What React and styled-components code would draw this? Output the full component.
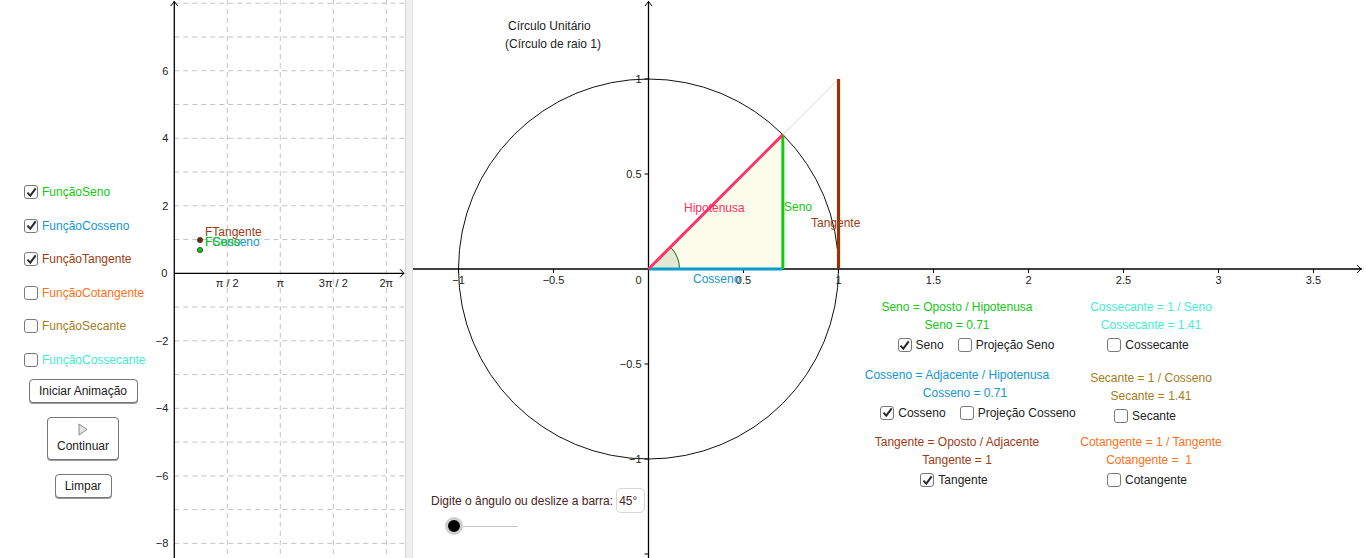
import React from "react";
import styled, { createGlobalStyle } from "styled-components";

const FONT = `"Liberation Sans", Arial, sans-serif`;

const C = {
  seno: "#14c814",
  cosseno: "#1596d0",
  tangente: "#9c3c14",
  cotangente: "#ff7020",
  secante: "#a67c1c",
  cossecante: "#44eed0",
  hipotenusa: "#ff3060",
  label: "#222",
  axis: "#000",
  grid: "#c4c4c4",
  prompt: "#4a2323",
};

const GlobalStyle = createGlobalStyle`
  html, body {
    margin: 0;
    padding: 0;
    background: #fff;
  }
  body {
    font-family: ${FONT};
    overflow: hidden;
  }
`;

const Applet = styled.div`
  display: flex;
  width: 1366px;
  height: 558px;
  overflow: hidden;
  background: #fff;
`;

const GraphicsView = styled.div`
  position: relative;
  flex: ${(p) => (p.$width ? `0 0 ${p.$width}px` : "1 1 auto")};
  height: 100%;
  overflow: hidden;
  background: #fff;
`;

const Splitter = styled.div`
  flex: 0 0 8px;
  box-sizing: border-box;
  background: #efefef;
  border-left: 1px solid #d6d6d6;
  border-right: 1px solid #e0e0e0;
`;

const Drawing = styled.svg`
  position: absolute;
  inset: 0;
  width: 100%;
  height: 100%;
  font-family: ${FONT};
`;

/* free text objects of the canvas */
const CanvasText = styled.span`
  position: absolute;
  left: ${(p) => p.$x}px;
  top: ${(p) => p.$y - 7}px;
  font-size: 12px;
  line-height: 14px;
  color: ${(p) => p.$color || C.label};
  white-space: pre;
`;

const Line = styled.span`
  font-size: 12px;
  line-height: 14px;
  color: ${(p) => p.$color || C.label};
  white-space: pre;
`;

/* check boxes */
const CheckItem = styled.label`
  display: flex;
  align-items: center;
  gap: 4px;
  font-size: 12px;
  line-height: 14px;
  color: ${(p) => p.$color || C.label};
  white-space: nowrap;
`;

const Box = styled.span`
  flex: 0 0 14px;
  height: 14px;
  box-sizing: border-box;
  border: 1.6px solid #7a7a7a;
  border-radius: 3px;
  background: #fff;
  display: flex;
  align-items: center;
  justify-content: center;
`;

function Check({ checked, color, children }) {
  return (
    <CheckItem $color={color}>
      <Box>
        {checked && (
          <svg width="11" height="11" viewBox="0 0 11 11">
            <path d="M1.4 5.6 L4.3 8.7 L9.7 1.4" fill="none" stroke="#2a2a2a" strokeWidth="2" />
          </svg>
        )}
      </Box>
      <span>{children}</span>
    </CheckItem>
  );
}

/* left control column */
const Controls = styled.div`
  position: absolute;
  left: 24px;
  top: 185px;
  width: 118px;
  display: flex;
  flex-direction: column;
`;

const CheckList = styled.div`
  display: flex;
  flex-direction: column;
  gap: 19.6px;
`;

const ButtonStack = styled.div`
  margin-top: 12px;
  display: flex;
  flex-direction: column;
  align-items: center;
  gap: 14px;
`;

const GgbButton = styled.button`
  width: ${(p) => p.$w}px;
  height: ${(p) => p.$h}px;
  padding: 0;
  display: flex;
  flex-direction: column;
  align-items: center;
  justify-content: center;
  gap: 3px;
  font: 12px ${FONT};
  color: #222;
  background: #fff;
  border: 1.5px solid #777;
  border-radius: 4px;
  box-shadow: 0 1px 0 #999;
`;

/* right formula panel */
const FormulaGrid = styled.div`
  position: absolute;
  left: 447px;
  top: 300px;
  display: grid;
  grid-template-columns: 194px 194px;
  row-gap: 15.5px;
`;

const Block = styled.div`
  display: flex;
  flex-direction: column;
  align-items: center;
  transform: translateY(${(p) => p.$dy || 0}px);
`;

const Value = styled(Line)`
  margin-top: 4px;
  transform: translateX(${(p) => p.$shift || 0}px);
`;

const CheckRow = styled.div`
  margin-top: 6px;
  display: flex;
  gap: 14px;
  transform: translateX(${(p) => p.$shift || 0}px);
`;

/* angle input */
const AngleInput = styled.div`
  position: absolute;
  left: 18px;
  top: 488px;
  display: flex;
  align-items: center;
  gap: 3px;
`;

const InputBox = styled.div`
  width: 29px;
  height: 25px;
  box-sizing: border-box;
  border: 1px solid #d6d6d6;
  border-radius: 5px;
  padding-left: 2px;
  display: flex;
  align-items: center;
  font-size: 12px;
  color: ${C.prompt};
`;

const Slider = styled.div`
  position: absolute;
  left: 32px;
  top: 517px;
  width: 73px;
  height: 18px;
  display: flex;
  align-items: center;
`;

const Knob = styled.span`
  flex: 0 0 18px;
  height: 18px;
  box-sizing: border-box;
  border-radius: 50%;
  background: #000;
  border: 3.5px solid #cdcdcd;
`;

const Track = styled.span`
  flex: 1;
  height: 1px;
  background: #c8c8c8;
`;

/* ---------- left view: graphs of the functions ---------- */

const LW = 405;
const L = { ox: 174.3, oy: 273.3, uy: 33.76, ux: 53 };

function LeftAxes() {
  const hLines = [];
  for (let k = -8; k <= 8; k++) {
    const y = L.oy - k * L.uy;
    if (k !== 0 && y > 0 && y < 558) hLines.push(y);
  }
  const vLines = [1, 2, 3, 4].map((j) => L.ox + j * L.ux);
  const yLabels = [6, 4, 2, -2, -4, -6, -8];
  const xLabels = ["π / 2", "π", "3π / 2", "2π"];
  return (
    <Drawing>
      <g stroke={C.grid} strokeWidth="1" strokeDasharray="5 4">
        {hLines.map((y) => (
          <line key={y} x1={L.ox} y1={y} x2={LW} y2={y} />
        ))}
        {vLines.map((x) => (
          <line key={x} x1={x} y1={0} x2={x} y2={558} />
        ))}
      </g>
      <g stroke={C.axis} strokeWidth="1.3" fill="none">
        <line x1={L.ox} y1={1} x2={L.ox} y2={558} />
        <line x1={L.ox} y1={L.oy} x2={LW - 1} y2={L.oy} />
        <path d={`M${L.ox - 3.5} 6 L${L.ox} 1.5 L${L.ox + 3.5} 6`} strokeWidth="1" />
        <path d={`M${LW - 5} ${L.oy - 4} L${LW - 1} ${L.oy} L${LW - 5} ${L.oy + 4}`} strokeWidth="1" />
      </g>
      <g fontSize="11" fill={C.label}>
        {yLabels.map((v) => (
          <text key={v} x={L.ox - 6} y={L.oy - v * L.uy + 4} textAnchor="end">
            {v < 0 ? `−${-v}` : v}
          </text>
        ))}
        <text x={L.ox - 7} y={L.oy + 4} textAnchor="end">0</text>
        {xLabels.map((t, i) => (
          <text key={t} x={L.ox + (i + 1) * L.ux} y={L.oy + 14} textAnchor="middle">
            {t}
          </text>
        ))}
      </g>
      <circle cx="200" cy="240" r="2.6" fill="#7a2a0a" stroke="#333" strokeWidth="0.8" />
      <circle cx="200" cy="250" r="2.6" fill={C.seno} stroke="#333" strokeWidth="0.8" />
    </Drawing>
  );
}

/* ---------- right view: unit circle ---------- */

const R = { ox: 235.5, oy: 269, u: 190, w: 953 };

function UnitCircle() {
  const { ox, oy, u, w } = R;
  const a = Math.PI / 4;
  const px = ox + u * Math.cos(a);
  const py = oy - u * Math.sin(a);
  const ar = 31;
  const xt = [-1, -0.5, 0.5, 1, 1.5, 2, 2.5, 3, 3.5];
  const yt = [1, 0.5, -0.5, -1, -1.5];
  const fmt = (v) => (v < 0 ? `−${-v}` : `${v}`);
  return (
    <Drawing>
      <polygon points={`${ox},${oy} ${px},${oy} ${px},${py}`} fill="#fdfdeb" />
      <path
        d={`M${ox} ${oy} L${ox + ar} ${oy} A${ar} ${ar} 0 0 0 ${ox + ar * Math.cos(a)} ${oy - ar * Math.sin(a)} Z`}
        fill="#e2ead6"
      />
      <path
        d={`M${ox + ar} ${oy} A${ar} ${ar} 0 0 0 ${ox + ar * Math.cos(a)} ${oy - ar * Math.sin(a)}`}
        fill="none"
        stroke="#1f6a1f"
        strokeWidth="1"
      />
      <circle cx={ox} cy={oy} r={u} fill="none" stroke="#111" strokeWidth="1" />
      <g stroke={C.axis} strokeWidth="1.3" fill="none">
        <line x1={0} y1={oy} x2={w - 4} y2={oy} />
        <line x1={ox} y1={1} x2={ox} y2={558} />
        <path d={`M${ox - 3.5} 6 L${ox} 1.5 L${ox + 3.5} 6`} strokeWidth="1" />
        <path d={`M${w - 9} ${oy - 4} L${w - 5} ${oy} L${w - 9} ${oy + 4}`} strokeWidth="1" />
        {xt.map((v) => (
          <line key={v} x1={ox + v * u} y1={oy} x2={ox + v * u} y2={oy + 4} strokeWidth="1" />
        ))}
        {yt.map((v) => (
          <line key={v} x1={ox - 4} y1={oy - v * u} x2={ox} y2={oy - v * u} strokeWidth="1" />
        ))}
      </g>
      <g fontSize="11" fill={C.label}>
        {xt.map((v) => (
          <text key={v} x={ox + v * u} y={oy + 15} textAnchor="middle">
            {fmt(v)}
          </text>
        ))}
        <text x={ox - 7} y={oy + 15} textAnchor="end">0</text>
        {yt.slice(0, 4).map((v) => (
          <text key={v} x={ox - 7} y={oy - v * u + 4} textAnchor="end">
            {fmt(v)}
          </text>
        ))}
      </g>
      <line x1={px} y1={py} x2={ox + u} y2={oy - u} stroke="#d4d4d4" strokeWidth="1" />
      <line x1={ox + u} y1={oy - u} x2={ox + u} y2={oy} stroke="#993300" strokeWidth="3.2" />
      <line x1={ox} y1={oy} x2={px} y2={oy} stroke="#0a9bd0" strokeWidth="3" />
      <line x1={px} y1={py} x2={px} y2={oy} stroke="#11cc11" strokeWidth="3" />
      <line x1={ox} y1={oy} x2={px} y2={py} stroke="#ff3366" strokeWidth="3" />
    </Drawing>
  );
}

const formulas = [
  { color: C.seno, rule: "Seno = Oposto / Hipotenusa", value: "Seno = 0.71", shift: 19,
    checks: [["Seno", true], ["Projeção Seno", false]] },
  { color: C.cossecante, rule: "Cossecante = 1 / Seno", value: "Cossecante = 1.41", shift: -3,
    checks: [["Cossecante", false]] },
  { color: C.cosseno, rule: "Cosseno = Adjacente / Hipotenusa", value: "Cosseno = 0.71", shift: 21, vshift: 8,
    checks: [["Cosseno", true], ["Projeção Cosseno", false]] },
  { color: C.secante, rule: "Secante = 1 / Cosseno", value: "Secante = 1.41", shift: -6, dy: 3,
    checks: [["Secante", false]] },
  { color: C.tangente, rule: "Tangente = Oposto / Adjacente", value: "Tangente = 1", shift: -3,
    checks: [["Tangente", true]] },
  { color: C.cotangente, rule: "Cotangente = 1 / Tangente", value: "Cotangente =  1", shift: -4, vshift: -2,
    checks: [["Cotangente", false]] },
];

const functionToggles = [
  ["FunçãoSeno", C.seno, true],
  ["FunçãoCosseno", C.cosseno, true],
  ["FunçãoTangente", C.tangente, true],
  ["FunçãoCotangente", C.cotangente, false],
  ["FunçãoSecante", C.secante, false],
  ["FunçãoCossecante", C.cossecante, false],
];

export default function App() {
  return (
    <>
      <GlobalStyle />
      <Applet>
        <GraphicsView $width={LW}>
          <LeftAxes />
          <CanvasText $x={205} $y={232} $color={C.tangente}>FTangente</CanvasText>
          <CanvasText $x={205} $y={242} $color={C.cosseno}>FCosseno</CanvasText>
          <CanvasText $x={205} $y={242} $color={C.seno}>FSeno</CanvasText>

          <Controls>
            <CheckList>
              {functionToggles.map(([name, color, on]) => (
                <Check key={name} color={color} checked={on}>
                  {name}
                </Check>
              ))}
            </CheckList>
            <ButtonStack>
              <GgbButton $w={109} $h={24}>Iniciar Animação</GgbButton>
              <GgbButton $w={72} $h={43}>
                <svg width="10" height="13" viewBox="0 0 10 13">
                  <path d="M1 1 L9 6.5 L1 12 Z" fill="#e4e4e4" stroke="#8a8a8a" strokeWidth="1" />
                </svg>
                <span>Continuar</span>
              </GgbButton>
              <GgbButton $w={57} $h={24}>Limpar</GgbButton>
            </ButtonStack>
          </Controls>
        </GraphicsView>

        <Splitter />

        <GraphicsView>
          <UnitCircle />
          <CanvasText $x={95} $y={26}>Círculo Unitário</CanvasText>
          <CanvasText $x={92} $y={44}>(Círculo de raio 1)</CanvasText>
          <CanvasText $x={271} $y={208} $color={C.hipotenusa}>Hipotenusa</CanvasText>
          <CanvasText $x={371} $y={207} $color={C.seno}>Seno</CanvasText>
          <CanvasText $x={398} $y={223} $color={C.tangente}>Tangente</CanvasText>
          <CanvasText $x={280} $y={279} $color={C.cosseno}>Cosseno</CanvasText>

          <FormulaGrid>
            {formulas.map((f) => (
              <Block key={f.rule} $dy={f.dy}>
                <Line $color={f.color}>{f.rule}</Line>
                <Value $color={f.color} $shift={f.vshift}>{f.value}</Value>
                <CheckRow $shift={f.shift}>
                  {f.checks.map(([label, on]) => (
                    <Check key={label} checked={on}>
                      {label}
                    </Check>
                  ))}
                </CheckRow>
              </Block>
            ))}
          </FormulaGrid>

          <AngleInput>
            <Line $color={C.prompt}>Digite o ângulo ou deslize a barra:</Line>
            <InputBox>45°</InputBox>
          </AngleInput>
          <Slider>
            <Knob />
            <Track />
          </Slider>
        </GraphicsView>
      </Applet>
    </>
  );
}
